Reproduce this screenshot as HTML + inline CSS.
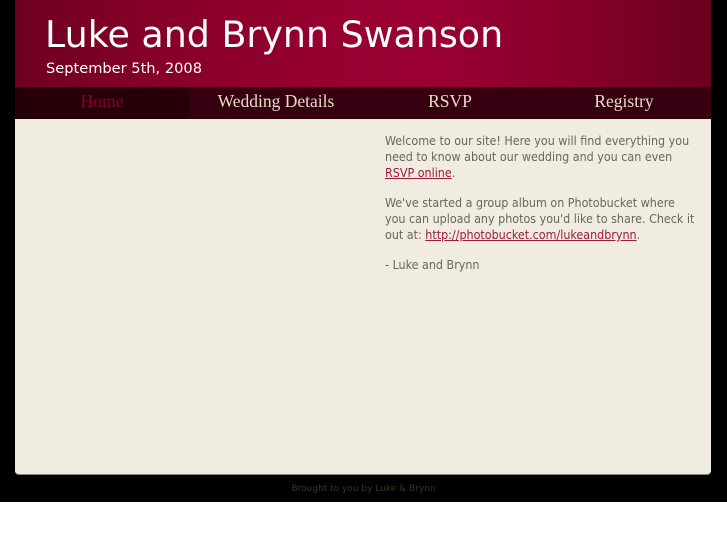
<!DOCTYPE html>
<html><head><style>
html,body{margin:0;padding:0;background:#fff;}
#wrap{background:#000;height:502px;position:relative;width:727px;}
#header{position:absolute;left:15px;top:0;width:696px;height:87px;background:linear-gradient(90deg,#6e0020 0%,#860027 20%,#96002f 45%,#9a0032 60%,#88002a 80%,#6a001e 100%);}
#header h1{margin:0;position:absolute;left:30px;top:13px;font:36.4px "DejaVu Sans",sans-serif;color:#fff;font-weight:normal;}
#header .d{position:absolute;left:31px;top:60px;font:14.6px "DejaVu Sans",sans-serif;color:#fff;}
#nav{position:absolute;left:15px;top:87px;width:696px;height:32px;background:#360010;display:flex;}
#nav div{flex:1;text-align:center;font:17.5px "Liberation Serif",serif;color:#e8dcc8;line-height:28px;}
#nav .on{background:#260008;color:#8a0028;}
#content{position:absolute;left:15px;top:119px;width:696px;height:355px;background:#f0ece0;border-radius:0 0 4px 4px;border-bottom:1px solid #8a8470;}
#text{position:absolute;left:370px;top:14px;width:311px;font:12.4px/16px "DejaVu Sans Condensed","DejaVu Sans",sans-serif;color:#6a665a;}
#text p{margin:0 0 14px 0;}
#text a{color:#a01840;text-decoration:underline;}
#foot{position:absolute;top:484px;left:0;width:727px;text-align:center;font:9px "DejaVu Sans",sans-serif;color:#3a3420;}
</style></head><body>
<div id="wrap">
<div id="header"><h1>Luke and Brynn Swanson</h1><div class="d">September 5th, 2008</div></div>
<div id="nav"><div class="on">Home</div><div>Wedding Details</div><div>RSVP</div><div>Registry</div></div>
<div id="content"><div id="text">
<p>Welcome to our site! Here you will find everything you need to know about our wedding and you can even <a>RSVP online</a>.</p>
<p>We've started a group album on Photobucket where<br>you can upload any photos you'd like to share. Check it out at: <a>http://photobucket.com/lukeandbrynn</a>.</p>
<p>- Luke and Brynn</p>
</div></div>
<div id="foot">Brought to you by Luke &amp; Brynn</div>
</div>
</body></html>
